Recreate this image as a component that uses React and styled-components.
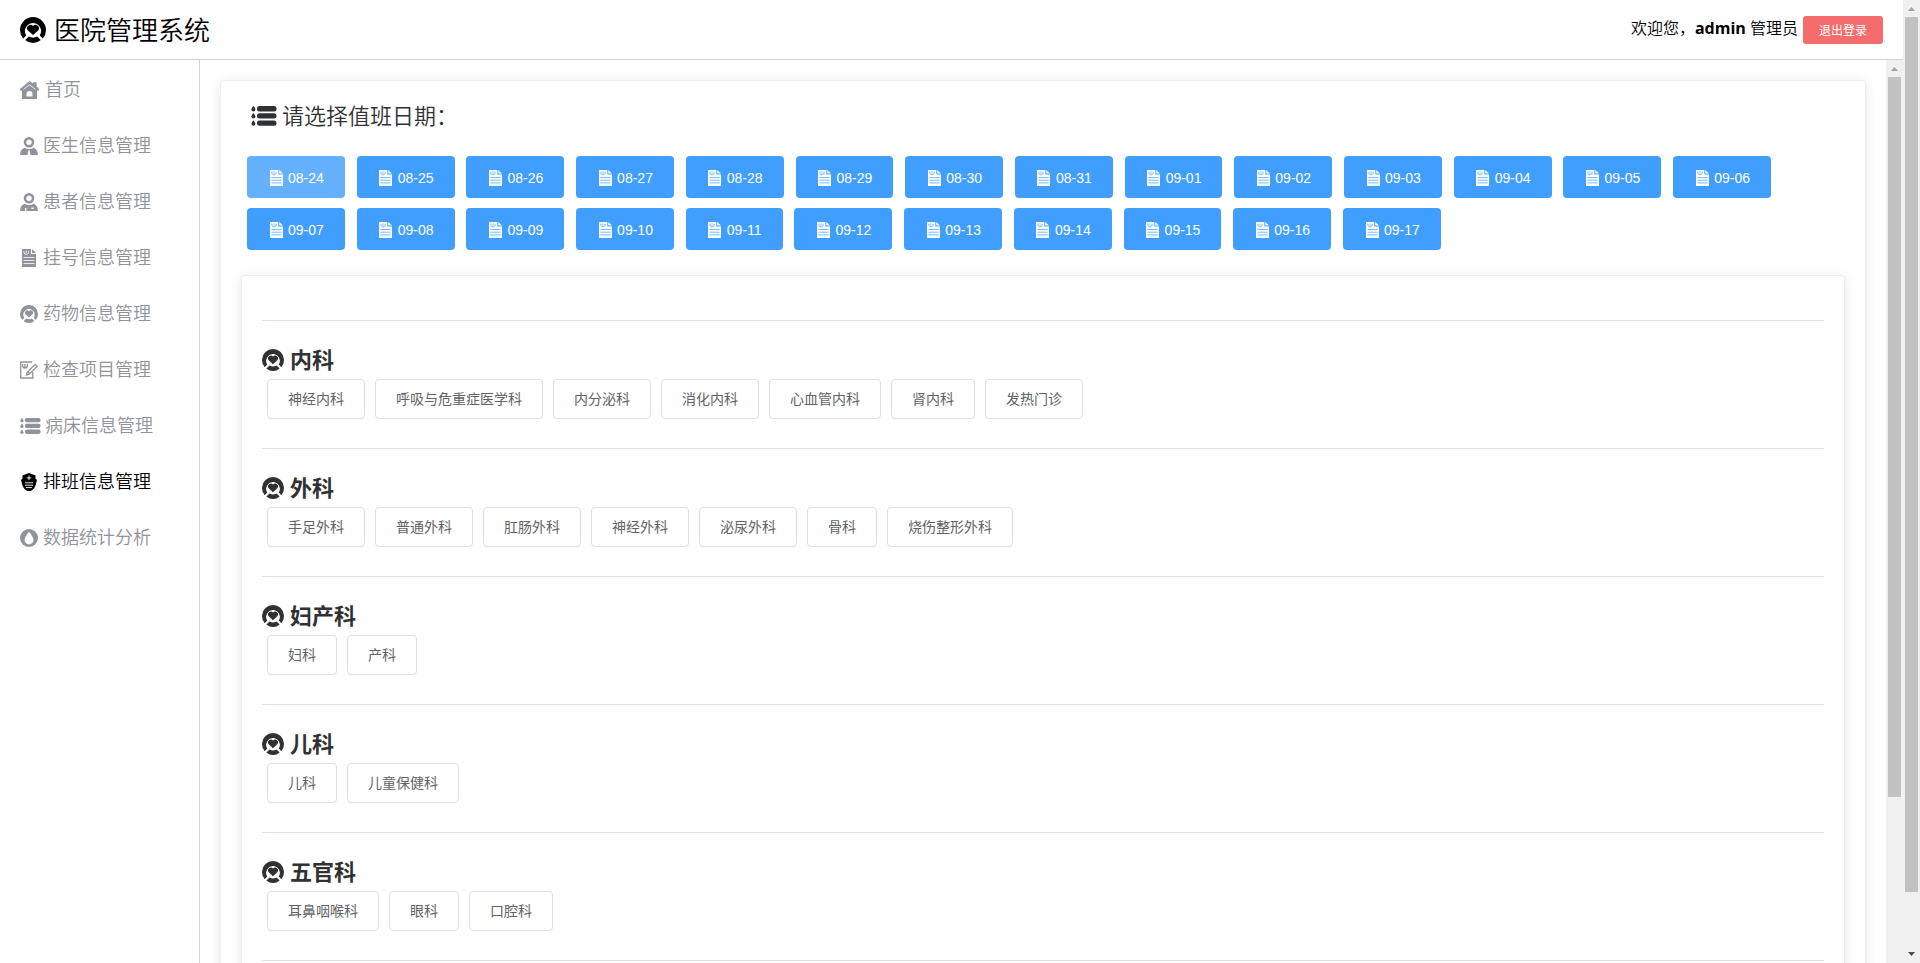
import React, { useState } from "react";
import styled, { createGlobalStyle } from "styled-components";

const GlobalStyle = createGlobalStyle`
  * {
    box-sizing: border-box;
  }
  body {
    margin: 0;
    background: #fff;
    overflow: hidden;
    font-family: "Open Sans", "Noto Sans CJK SC", sans-serif;
  }
`;

const Window = styled.div`
  display: flex;
  width: 100%;
  height: 100vh;
  overflow: hidden;
`;
const Page = styled.div`
  flex: 1;
  min-width: 0;
  display: flex;
  flex-direction: column;
`;
const Header = styled.header`
  flex: none;
  height: 60px;
  border-bottom: 1px solid lightgrey;
  display: flex;
  justify-content: space-between;
  padding: 0 20px;
`;
const Label = styled.span`
  padding-bottom: ${(props) => (props.$raised ? 4 : 2)}px;
`;
const Brand = styled.div`
  display: flex;
  align-items: center;
  gap: 8px;
  height: 60px;
  font-size: 26px;
  font-weight: 350;
  color: #000;
`;
const UserInfo = styled.div`
  display: flex;
  align-items: center;
  height: 28px;
  margin-top: 16px;
  font-size: 16px;
  line-height: 24px;
  white-space: pre;
`;
const Welcome = styled.span`
  margin-right: 5px;
  padding-bottom: 4px;
  font-weight: 350;
`;
const LogoutButton = styled.button`
  width: 80px;
  height: 28px;
  padding: 0 0 1px;
  border: none;
  border-radius: 3px;
  background: #f56c6c;
  color: #fff;
  font-family: inherit;
  font-size: 12px;
  cursor: pointer;
`;
const Body = styled.div`
  flex: 1;
  min-height: 0;
  display: flex;
`;
const Sidebar = styled.nav`
  flex: none;
  width: 200px;
  padding-top: 2px;
  border-right: 1px solid lightgrey;
`;
const MenuItem = styled.div`
  display: flex;
  align-items: center;
  gap: ${(props) => props.$gap || 5}px;
  height: 56px;
  padding-left: 20px;
  font-size: 18px;
  font-weight: 350;
  color: ${(props) => (props.$active ? "#000" : "#909399")};
  cursor: pointer;
`;
const Main = styled.main`
  flex: 1;
  min-width: 0;
  padding: 20px;
  overflow: hidden;
`;
const Card = styled.section`
  border: 1px solid #ebeef5;
  border-radius: 4px;
  background: #fff;
  box-shadow: 0 2px 12px 0 rgba(0, 0, 0, 0.1);
  padding: 20px;
  color: #303133;
`;
const CardTitle = styled.div`
  display: flex;
  align-items: center;
  gap: 5px;
  height: 30px;
  padding-left: 10px;
  font-size: 22px;
  font-weight: 350;
`;
const DateList = styled.div`
  display: flex;
  flex-wrap: wrap;
  gap: 10px 11.9px;
  width: 1570px;
  padding-left: 6px;
  margin: 25px 0;
`;
const DateButton = styled.button`
  display: flex;
  align-items: center;
  height: 42px;
  padding: 1px 21px 0 22.5px;
  border: none;
  border-radius: 4px;
  background: ${(props) => (props.$active ? "#66b1ff" : "#409eff")};
  color: #fff;
  font: 14px "Liberation Sans", Arial, sans-serif;
  cursor: pointer;

  svg {
    margin-right: 5.5px;
  }
`;
const Divider = styled.div`
  height: 1px;
  margin: 24px 0;
  background: #dcdfe6;
`;
const DeptTitle = styled.div`
  display: flex;
  align-items: center;
  gap: 6px;
  height: 30px;
  font-size: 22px;
  font-weight: 700;
`;
const DeptList = styled.div`
  display: flex;
  gap: 10px;
  padding: 4px 5px 5px;
`;
const DeptButton = styled.button`
  height: 40px;
  padding: 0 20px 2px;
  border: 1px solid #dcdfe6;
  border-radius: 4px;
  background: #fff;
  color: #606266;
  font-family: "Noto Sans CJK SC", sans-serif;
  font-size: 14px;
  cursor: pointer;
`;
const ScrollTrack = styled.div`
  flex: none;
  display: flex;
  flex-direction: column;
  align-items: center;
  width: 17px;
  background: #f0f0f0;
`;
const ScrollArrow = styled.svg`
  flex: none;
  width: 17px;
  height: 17px;
  margin-top: ${(props) => (props.$end ? "auto" : 0)};
  fill: ${(props) => (props.$end ? "#505050" : "#a3a3a3")};
`;
const ScrollThumb = styled.div`
  width: 13px;
  height: ${(props) => props.$length}px;
  background: #c1c1c1;
`;
const Icon = styled.svg`
  flex: none;
  display: block;
  fill: currentColor;
`;

function HeartIcon({ size }) {
  return (
    <Icon width={size} height={size} viewBox="0 0 26 26">
      <path d="M3.2 21.6A13 13 0 1 1 22.8 21.6L19.8 18.4A8.1 8.1 0 1 0 6.2 18.4Z" />
      <path d="M13 18 7.9 13.4A3.1 3.1 0 0 1 13 9 3.1 3.1 0 0 1 18.1 13.4Z" />
      <path d="M5.2 23 8.8 19.6Q13 21.8 17.2 19.6L20.8 23Q17.4 26 13 26T5.2 23Z" />
    </Icon>
  );
}

function HomeIcon() {
  return (
    <Icon width="19" height="18" viewBox="0 0 19 18">
      <path
        fillRule="evenodd"
        d="M9.5 0 13 2.5V1.2H16.6V5.2L19 8V9.5H17V18H2V9.5H0V8ZM9.5 10A3 3 0 0 0 6.5 13V15.600H12.500V13A3 3 0 0 0 9.500 10Z"
      />
      <path d="M3.500 8.300 9.500 3.800 15.500 8.300" fill="none" stroke="#fff" strokeWidth="0.800" />
    </Icon>
  );
}

function PersonIcon({ tie }) {
  return (
    <Icon width="18" height="18" viewBox="0 0 18 18">
      <circle cx="9" cy="5.3" r="4" fill="none" stroke="currentColor" strokeWidth="2.6" />
      <path d="M0 18Q.2 12.4 4.6 10.8Q6.5 12 9 12T13.4 10.8Q17.8 12.4 18 18Z" />
      {tie ? (
        <path d="M8.2 13.5H9.8V15L10.6 18H7.4L8.2 15Z" fill="#fff" />
      ) : (
        <path d="M5 15H6.400V18H5ZM11.400 14.600H13.800V16H11.400Z" fill="#fff" />
      )}
    </Icon>
  );
}

function FileIcon({ width, height, line }) {
  return (
    <Icon width={width} height={height} viewBox="0 0 14 18" preserveAspectRatio="none">
      <path d="M0 0H9V5H14V18H0ZM10 0 14 4H10Z" />
      <g fill="none" stroke={line} strokeWidth="0.8">
        <path d="M2 2V3.5Q2.5 5.5 4.3 5.5T6.6 3.5V2M4.3 1.5V4" />
        <path d="M1.5 8.5H12.5M1.5 11.5H12.5M1.5 14.5H12.5" />
      </g>
    </Icon>
  );
}

const MenuFileIcon = styled.span`
  display: flex;
  justify-content: center;
  width: 18px;
`;

function EditIcon() {
  return (
    <Icon width="18" height="18" viewBox="0 0 18 18">
      <g fill="none" stroke="currentColor" strokeWidth="1.3">
        <path d="M12 1H.7V17H12.8V11" />
        <path d="M2.6 3V5Q3 7 5 7T7.4 5V3M5 3V7" />
        <path d="M15.2 3.4 17.2 5.3 9.3 13.2 6.5 14 7.3 11.2ZM8 11 10 13" />
      </g>
    </Icon>
  );
}

function ListIcon({ width, height }) {
  return (
    <Icon width={width} height={height} viewBox="0 0 26 22">
      {[0, 7.2, 14.4].map((y) => (
        <g key={y} transform={`translate(0 ${y})`}>
          <rect x="6" y="1" width="19.5" height="5.4" rx="2.5" />
          <path d="M2.4 .8Q4.4 3.2 4.4 4.4A2 2 0 0 1 .4 4.4Q.4 3.2 2.4 .8Z" />
        </g>
      ))}
    </Icon>
  );
}

function NurseIcon() {
  return (
    <Icon width="18" height="18" viewBox="0 0 18 18">
      <path d="M9 0Q12.5 1.2 15.5 2.6V5.5L17 7 15.7 12Q13.5 18 9 18T2.3 12L1 7 2.5 5.5V2.6Q5.5 1.2 9 0Z" />
      <path
        d="M9 2.6V7.2M6.7 4.9H11.3M5 9.8H13M5 12.2H13M6 14.6H12"
        stroke="#fff"
        strokeWidth="0.9"
      />
    </Icon>
  );
}

function DropIcon() {
  return (
    <Icon width="18" height="18" viewBox="0 0 18 18">
      <circle cx="9" cy="9" r="9" />
      <path d="M9 2.8Q13.4 8 13.4 11A4.4 4.4 0 0 1 4.6 11Q4.6 8 9 2.8Z" fill="#fff" />
    </Icon>
  );
}

function Scrollbar({ length, end }) {
  return (
    <ScrollTrack>
      <ScrollArrow viewBox="0 0 17 17">
        <path d="M5 11 8.5 7 12 11Z" />
      </ScrollArrow>
      <ScrollThumb $length={length} />
      {end && (
        <ScrollArrow $end viewBox="0 0 17 17">
          <path d="M5 6H12L8.5 10Z" />
        </ScrollArrow>
      )}
    </ScrollTrack>
  );
}

const menus = [
  { name: "首页", icon: <HomeIcon />, gap: 6 },
  { name: "医生信息管理", icon: <PersonIcon tie /> },
  { name: "患者信息管理", icon: <PersonIcon /> },
  {
    name: "挂号信息管理",
    icon: (
      <MenuFileIcon>
        <FileIcon width="14" height="18" line="#fff" />
      </MenuFileIcon>
    ),
  },
  { name: "药物信息管理", icon: <HeartIcon size={18} /> },
  { name: "检查项目管理", icon: <EditIcon /> },
  { name: "病床信息管理", icon: <ListIcon width="21" height="18" />, gap: 4 },
  { name: "排班信息管理", icon: <NurseIcon /> },
  { name: "数据统计分析", icon: <DropIcon /> },
];

const dates = [
  "08-24", "08-25", "08-26", "08-27", "08-28", "08-29", "08-30", "08-31",
  "09-01", "09-02", "09-03", "09-04", "09-05", "09-06", "09-07", "09-08",
  "09-09", "09-10", "09-11", "09-12", "09-13", "09-14", "09-15", "09-16",
  "09-17",
];

const departments = [
  {
    name: "内科",
    items: ["神经内科", "呼吸与危重症医学科", "内分泌科", "消化内科", "心血管内科", "肾内科", "发热门诊"],
  },
  {
    name: "外科",
    items: ["手足外科", "普通外科", "肛肠外科", "神经外科", "泌尿外科", "骨科", "烧伤整形外科"],
  },
  { name: "妇产科", items: ["妇科", "产科"] },
  { name: "儿科", items: ["儿科", "儿童保健科"] },
  { name: "五官科", items: ["耳鼻咽喉科", "眼科", "口腔科"] },
];

function App() {
  const [menu, setMenu] = useState("排班信息管理");
  const [date, setDate] = useState("08-24");
  return (
    <>
      <GlobalStyle />
      <Window>
        <Page>
          <Header>
            <Brand>
              <HeartIcon size={26} />
              <Label>医院管理系统</Label>
            </Brand>
            <UserInfo>
              <Welcome>
                欢迎您，<b>admin</b> 管理员
              </Welcome>
              <LogoutButton>退出登录</LogoutButton>
            </UserInfo>
          </Header>
          <Body>
            <Sidebar>
              {menus.map((item) => (
                <MenuItem
                  key={item.name}
                  $active={item.name === menu}
                  $gap={item.gap}
                  onClick={() => setMenu(item.name)}
                >
                  {item.icon}
                  <Label $raised>{item.name}</Label>
                </MenuItem>
              ))}
            </Sidebar>
            <Main>
              <Card>
                <CardTitle>
                  <ListIcon width="26" height="22" />
                  <Label $raised>请选择值班日期：</Label>
                </CardTitle>
                <DateList>
                  {dates.map((day) => (
                    <DateButton key={day} $active={day === date} onClick={() => setDate(day)}>
                      <FileIcon width="13" height="16" line="#409eff" />
                      {day}
                    </DateButton>
                  ))}
                </DateList>
                <Card>
                  <Divider />
                  {departments.map((dept) => (
                    <React.Fragment key={dept.name}>
                      <DeptTitle>
                        <HeartIcon size={22} />
                        <Label $raised>{dept.name}</Label>
                      </DeptTitle>
                      <DeptList>
                        {dept.items.map((item) => (
                          <DeptButton key={item}>{item}</DeptButton>
                        ))}
                      </DeptList>
                      <Divider />
                    </React.Fragment>
                  ))}
                </Card>
              </Card>
            </Main>
            <Scrollbar length={720} />
          </Body>
        </Page>
        <Scrollbar length={875} end />
      </Window>
    </>
  );
}

export default App;
